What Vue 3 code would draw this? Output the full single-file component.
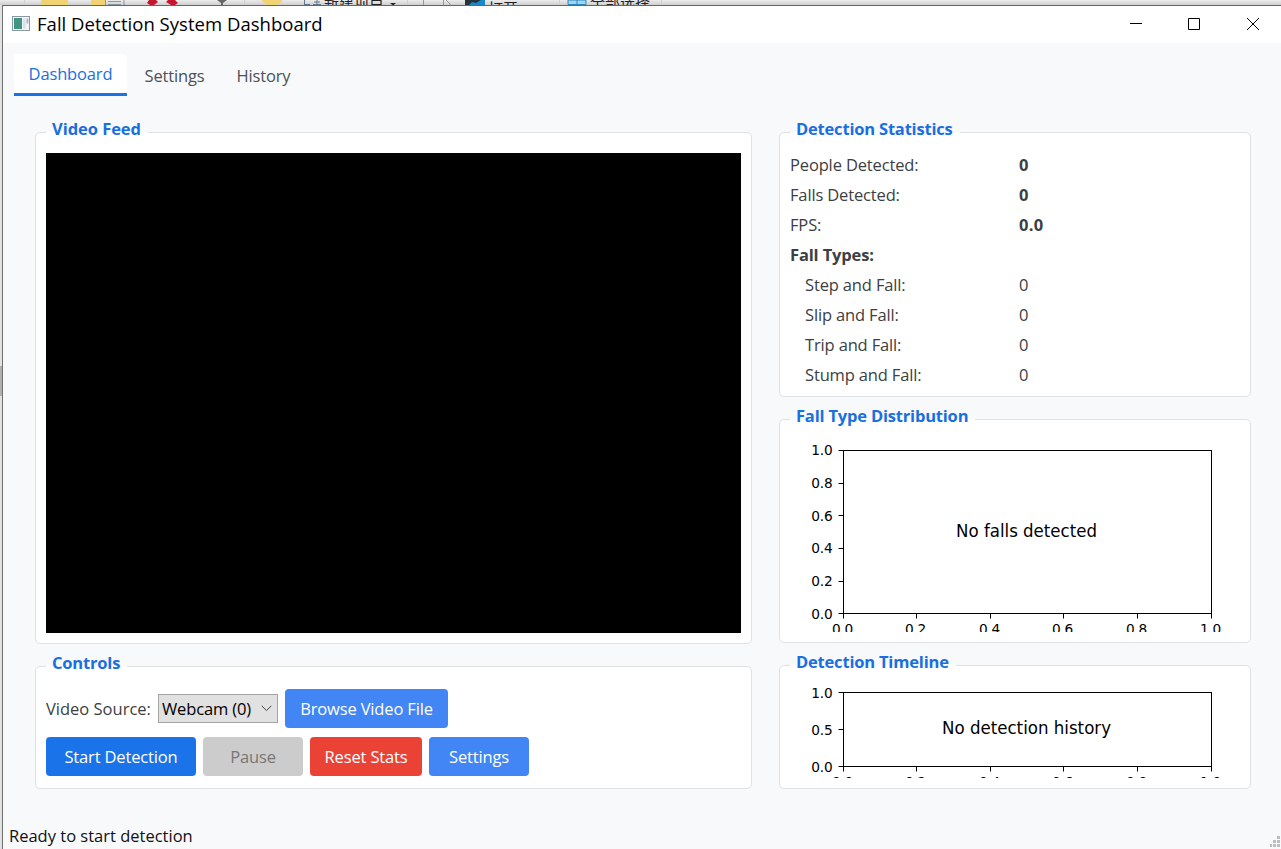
<script setup>
import { ref } from 'vue';
const tabs = ['Dashboard', 'Settings', 'History'];
const activeTab = ref('Dashboard');
const source = ref('Webcam (0)');
const stats = ref([
    { label: 'People Detected:', value: '0', kind: 'total' },
    { label: 'Falls Detected:', value: '0', kind: 'total' },
    { label: 'FPS:', value: '0.0', kind: 'total' },
    { label: 'Fall Types:', value: '', kind: 'heading' },
    { label: 'Step and Fall:', value: '0', kind: 'type' },
    { label: 'Slip and Fall:', value: '0', kind: 'type' },
    { label: 'Trip and Fall:', value: '0', kind: 'type' },
    { label: 'Stump and Fall:', value: '0', kind: 'type' },
]);
// axis ticks shared by both empty plots
const xTicks = [
    { x: 53.5, text: '0.0' },
    { x: 126.5, text: '0.2' },
    { x: 200.5, text: '0.4' },
    { x: 273.5, text: '0.6' },
    { x: 347.5, text: '0.8' },
    { x: 421.5, text: '1.0' },
];
const charts = [
    {
        title: 'Fall Type Distribution', name: 'distribution', height: 202,
        top: 20.5, bottom: 183.5, message: 'No falls detected', messageY: 107, messageWidth: 141,
        yTicks: [
            { y: 20.5, textY: 25, text: '1.0' },
            { y: 53.5, textY: 58, text: '0.8' },
            { y: 85.5, textY: 91, text: '0.6' },
            { y: 118.5, textY: 123, text: '0.4' },
            { y: 151.5, textY: 156, text: '0.2' },
            { y: 183.5, textY: 189, text: '0.0' },
        ],
    },
    {
        title: 'Detection Timeline', name: 'timeline', height: 102,
        top: 16.5, bottom: 90.5, message: 'No detection history', messageY: 58, messageWidth: 169,
        yTicks: [
            { y: 16.5, textY: 22, text: '1.0' },
            { y: 53.5, textY: 59, text: '0.5' },
            { y: 90.5, textY: 96, text: '0.0' },
        ],
    },
];
</script>

<template>
    <div class="screen">
        <svg class="behind" width="1281" height="5" viewBox="0 0 1281 5">
            <rect x="41" width="27" height="5" fill="#f2d374" />
            <rect x="91" width="14" height="5" fill="#f2d374" />
            <path d="M105.500 0V5M124 0V5M108 1.500H121M108 4.500H121" stroke="#8796a8" fill="none" />
            <path d="M149 0H156L158 2L154 5H150L147 3ZM168 0H175L178 3L175 5H171L166 2Z" fill="#c8142c" />
            <path d="M217 0H227L223 3V5H221V3Z" fill="#666" />
            <path d="M261 0H282V2L276 5H267Z" fill="#f2d374" />
            <path d="M304.500 0V5M304 4.500H310M313 4.500H321M317 0V4M314 2H320" stroke="#60798c" fill="none" />
            <text class="behind-text" x="324" y="8">新建项目</text>
            <path d="M390 3H396L393 5.500Z" fill="#222" />
            <path d="M423.500 0V5M443.500 0V5M446 0L450 4V5" stroke="#999" fill="none" />
            <rect x="465" width="20" height="5" fill="#1689cc" />
            <path d="M465 0H481L476 3L472 2L469 5H465Z" fill="#26313b" />
            <text class="behind-text" x="488" y="14">打开</text>
            <path d="M568 0H586V4.500H568ZM577 0V5" fill="#9dd5f5" stroke="#3187bd" />
            <text class="behind-text" x="590" y="8">全部选择</text>
            <path d="M24.500 0V5M244.500 0V5M407.500 0V5M559.500 0V5M661.500 0V5" stroke="#d0d0d0" />
        </svg>
        <div class="desktop">
            <div class="edge"></div>
            <div class="window">
                <header class="titlebar">
                    <svg class="app-icon" width="20" height="16" viewBox="0 0 20 16">
                        <rect x="1.500" y=".5" width="17" height="14" fill="#f2f5f8" stroke="#8c979f" />
                        <rect x="3" y="2" width="8" height="11" fill="#3f9482" />
                        <rect x="12" y="2.500" width="2.500" height="10" fill="#d8e0ea" />
                        <rect x="15.500" y="2.500" width="2" height="5" fill="#a9bacb" />
                    </svg>
                    <span class="caption">Fall Detection System Dashboard</span>
                    <div class="window-buttons">
                        <svg width="12" height="12" viewBox="0 0 12 12"><path d="M0 5.500H12" /></svg>
                        <svg width="12" height="12" viewBox="0 0 12 12"><path d="M.5 .5H11.500V11.500H.5Z" /></svg>
                        <svg class="close" width="12" height="12" viewBox="0 0 12 12"><path d="M0 0L12 12M12 0L0 12" /></svg>
                    </div>
                </header>
                <nav class="tabs">
                    <button v-for="tab in tabs" :key="tab" class="tab" :class="[tab.toLowerCase(), { active: tab == activeTab }]" @click="activeTab = tab">{{ tab }}</button>
                </nav>
                <main class="content">
                    <div class="column left">
                        <section class="panel video">
                            <h2>Video Feed</h2>
                            <div class="feed"></div>
                        </section>
                        <section class="panel controls">
                            <h2>Controls</h2>
                            <div class="control-row">
                                <span class="source-label">Video Source:</span>
                                <div class="source-select">
                                    <span>{{ source }}</span>
                                    <svg width="11" height="7" viewBox="0 0 11 7"><path d="M.7 .8L5.500 5.600L10.300 .8" /></svg>
                                </div>
                                <button class="btn light browse">Browse Video File</button>
                            </div>
                            <div class="control-row">
                                <button class="btn start">Start Detection</button>
                                <button class="btn pause" disabled>Pause</button>
                                <button class="btn reset">Reset Stats</button>
                                <button class="btn light settings">Settings</button>
                            </div>
                        </section>
                    </div>
                    <div class="column right">
                        <section class="panel statistics">
                            <h2>Detection Statistics</h2>
                            <div v-for="row in stats" :key="row.label" class="stat" :class="row.kind">
                                <span class="stat-label">{{ row.label }}</span>
                                <span class="stat-value">{{ row.value }}</span>
                            </div>
                        </section>
                        <section v-for="chart in charts" :key="chart.name" class="panel" :class="chart.name">
                            <h2>{{ chart.title }}</h2>
                            <svg class="chart" width="450" :height="chart.height">
                                <rect x="53.500" :y="chart.top" width="368" :height="chart.bottom - chart.top" />
                                <g v-for="tick in chart.yTicks" :key="tick.text">
                                    <path :d="`M48.500 ${tick.y}H53.500`" />
                                    <text x="42.500" :y="tick.textY" text-anchor="end">{{ tick.text }}</text>
                                </g>
                                <g v-for="tick in xTicks" :key="tick.text">
                                    <path :d="`M${tick.x} ${chart.bottom}v5`" />
                                    <text :x="tick.x - 1" :y="chart.bottom + 20.5" text-anchor="middle">{{ tick.text }}</text>
                                </g>
                                <text class="message" x="236.500" :y="chart.messageY" text-anchor="middle" :textLength="chart.messageWidth" lengthAdjust="spacingAndGlyphs">{{ chart.message }}</text>
                            </svg>
                        </section>
                    </div>
                </main>
                <footer class="statusbar">
                    <span>Ready to start detection</span>
                    <svg class="grip" width="11" height="11" viewBox="0 0 11 11">
                        <path d="M7 0h3v3h-3zM3 4h3v3h-3zM7 4h3v3h-3zM0 8h2v3h-2zM3 8h3v3h-3zM7 8h3v3h-3z" />
                    </svg>
                </footer>
            </div>
        </div>
    </div>
</template>

<style scoped>
.screen{
    width: 1281px;
    height: 849px;
    overflow: hidden;
    display: flex;
    flex-direction: column;
    background-color: #dfdfdf;
    color: #3c4043;
    font-family: "Open Sans", "Noto Sans", "Noto Sans CJK SC", sans-serif;
    font-size: 16.5px;
    letter-spacing: -0.15px;
}
.behind{
    display: block;
    flex: none;
    background: linear-gradient(#ececec, #cfcfcf);
}
.behind-text{
    font-family: "Noto Sans CJK SC", sans-serif;
    font-size: 15px;
    letter-spacing: 0;
    fill: #222222;
}
.desktop{
    display: flex;
    flex: 1;
    min-height: 0;
}
.edge{
    width: 2px;
    background: linear-gradient(#e2e2e2 361px, #b0b0b0 361px, #b0b0b0 391px, #e2e2e2 391px);
}
.window{
    flex: 1;
    display: flex;
    flex-direction: column;
    border-left: 1px solid #707070;
    border-top: 1px solid #666666;
    background-color: #f8f9fb;
}
.titlebar{
    box-sizing: border-box;
    height: 37px;
    display: flex;
    align-items: center;
    background-color: #ffffff;
    color: #000000;
    padding: 0 22px 1px 8px;
}
.app-icon{
    margin-right: 6px;
}
.caption{
    font-size: 18.5px;
    letter-spacing: 0.03px;
    flex: 1;
    padding-bottom: 2px;
    white-space: nowrap;
}
.window-buttons{
    display: flex;
    gap: 46px;
}
.window-buttons .close{
    margin-left: 1px;
}
.window-buttons path{
    fill: none;
    stroke: #000000;
}
.tabs{
    display: flex;
    margin: 11px 0 0 11px;
    height: 42px;
}
button{
    font: inherit;
    letter-spacing: inherit;
    border: 0;
    padding: 0;
    white-space: nowrap;
}
.tab{
    background-color: transparent;
    color: #4d5155;
}
.tab.active{
    width: 113px;
    background-color: #ffffff;
    color: #1a6fe0;
    border-bottom: 3px solid #1a73e8;
    border-radius: 4px 4px 0 0;
}
.tab.settings{
    width: 95px;
}
.tab.history{
    width: 83px;
}
.content{
    display: flex;
    gap: 27px;
    margin: 36px 0 0 32px;
}
.column{
    display: flex;
    flex-direction: column;
    gap: 22px;
}
.left{
    width: 717px;
}
.right{
    width: 472px;
}
.panel{
    position: relative;
    box-sizing: border-box;
    background-color: #ffffff;
    border: 1px solid #dee1e5;
    border-radius: 5px;
}
/* the title interrupts the top border of its panel */
.panel h2{
    position: absolute;
    left: 10px;
    top: -16px;
    margin: 0;
    padding: 0 7px 0 6px;
    height: 24px;
    line-height: 24px;
    font-size: 16.5px;
    letter-spacing: -0.19px;
    font-weight: bold;
    color: #1a6fe0;
    white-space: nowrap;
    background: linear-gradient(#f8f9fb 15px, #ffffff 15px);
}
.panel.video h2{
    letter-spacing: -0.05px;
}
.video{
    height: 512px;
    padding: 20px 10px 10px;
}
.feed{
    height: 480px;
    background-color: #000000;
}
.controls{
    height: 123px;
    padding: 22px 10px 0;
}
.control-row{
    display: flex;
    align-items: center;
    gap: 7px;
    height: 39px;
    margin-bottom: 9px;
}
.source-label{
    width: 105px;
    letter-spacing: 0;
    white-space: nowrap;
}
.source-select{
    box-sizing: border-box;
    width: 120px;
    height: 29px;
    display: flex;
    align-items: center;
    justify-content: space-between;
    padding: 0 5px 0 3px;
    border: 1px solid #a4a4a4;
    background-color: #e1e1e1;
    color: #000000;
    white-space: nowrap;
}
.source-select path{
    fill: none;
    stroke: #444444;
}
.btn{
    height: 39px;
    border-radius: 4px;
    background-color: #1a73e8;
    color: #ffffff;
}
.btn.light{
    background-color: #4285f4;
}
.btn.browse{
    width: 163px;
}
.btn.start{
    width: 150px;
}
.btn.pause{
    width: 100px;
    background-color: #cccccc;
    color: #777777;
}
.btn.reset{
    width: 112px;
    background-color: #ea4335;
}
.btn.settings{
    width: 100px;
}
.statistics{
    height: 265px;
    padding: 17px 10px 0;
}
.stat{
    display: flex;
    height: 30px;
    line-height: 30px;
}
.stat-label{
    box-sizing: border-box;
    width: 229px;
}
.type .stat-label{
    padding-left: 15px;
}
.heading .stat-label, .total .stat-value{
    font-weight: bold;
}
.total .stat-value{
    letter-spacing: 0.3px;
}
.distribution{
    height: 224px;
    padding: 10px;
}
.timeline{
    height: 124px;
    padding: 10px;
}
.chart{
    display: block;
    overflow: hidden;
    font-family: "DejaVu Sans", sans-serif;
    font-size: 13.7px;
    letter-spacing: -0.2px;
}
.chart rect, .chart path{
    fill: none;
    stroke: #000000;
    stroke-width: 1;
}
.chart .message{
    font-size: 17.3px;
    letter-spacing: 0;
}
.statusbar{
    flex: 1;
    display: flex;
    align-items: flex-end;
    justify-content: space-between;
    padding: 0 0 2px 6px;
    letter-spacing: 0;
    color: #111111;
}
.grip{
    fill: #bdbdbd;
}
</style>
<style>
body{
    margin: 0;
    overflow: hidden;
}
</style>
